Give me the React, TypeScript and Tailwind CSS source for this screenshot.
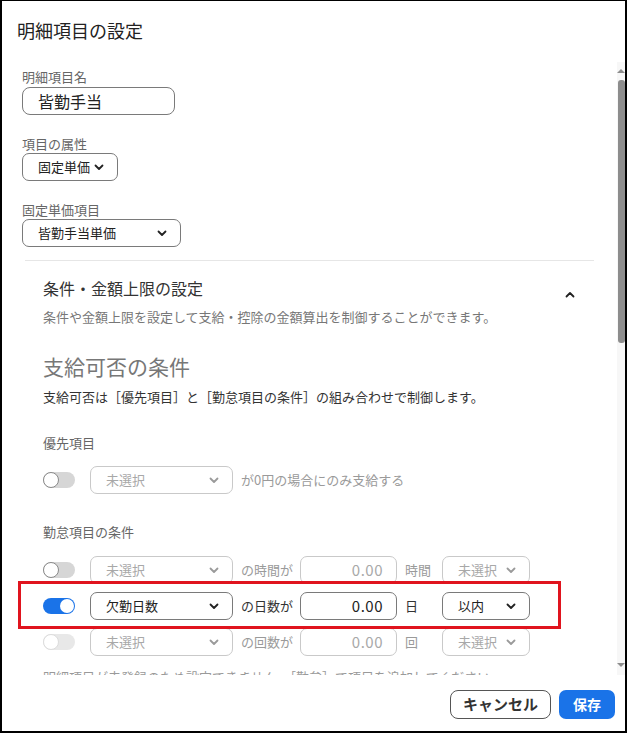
import React from "react";

const FONT = { fontFamily: '"Noto Sans CJK JP", "Noto Sans", sans-serif' };

function Chevron({ className = "" }: { className?: string }) {
  return (
    <svg width="10" height="7" viewBox="0 0 10 7" className={className}>
      <path d="M1.5 1.5 L5 5 L8.5 1.5" fill="none" stroke="currentColor" strokeWidth="1.8" strokeLinecap="round" strokeLinejoin="round" />
    </svg>
  );
}

function Toggle({ on, faint }: { on?: boolean; faint?: boolean }) {
  if (on) {
    return (
      <div className="relative w-[32px] h-[16px] rounded-full bg-[#1a73e8] shrink-0">
        <div className="absolute right-[1px] top-[1px] w-[14px] h-[14px] rounded-full bg-white" />
      </div>
    );
  }
  return (
    <div className={`relative w-[32px] h-[16px] rounded-full shrink-0 ${faint ? "bg-[#e8e8e8]" : "bg-[#d6d6d6]"}`}>
      <div className={`absolute left-0 top-0 w-[16px] h-[16px] rounded-full bg-white border ${faint ? "border-[#dcdcdc]" : "border-[#8a8a8a]"}`} />
    </div>
  );
}

function Select({ w, text, disabled }: { w: string; text: string; disabled?: boolean }) {
  return (
    <div
      className={`${w} h-[28px] shrink-0 rounded-[7px] border flex items-center justify-between pl-[15px] pr-[13px] text-[13px] ${
        disabled ? "border-[#c9c9c9] text-[#a8a8a8]" : "border-[#7a7a7a] text-[#222]"
      }`}
    >
      <span>{text}</span>
      <Chevron className={disabled ? "text-[#9a9a9a]" : "text-[#222]"} />
    </div>
  );
}

function NumInput({ disabled }: { disabled?: boolean }) {
  return (
    <div
      className={`w-[97px] h-[28px] shrink-0 rounded-[7px] border flex items-center justify-end pr-[13px] text-[15px] tracking-[0.5px] ${
        disabled ? "border-[#c9c9c9] text-[#a8a8a8]" : "border-[#7a7a7a] text-[#222]"
      }`}
    >
      0.00
    </div>
  );
}

function CondRow({
  on,
  faint,
  disabled,
  selText,
  label,
  unit,
  sel2,
}: {
  on?: boolean;
  faint?: boolean;
  disabled?: boolean;
  selText: string;
  label: string;
  unit: string;
  sel2: string;
}) {
  return (
    <div className="flex items-center h-[28px]">
      <div className="w-[47px] shrink-0 flex">
        <Toggle on={on} faint={faint} />
      </div>
      <Select w="w-[143px]" text={selText} disabled={disabled} />
      <div className={`w-[67px] shrink-0 pl-[8px] text-[13px] ${disabled ? "text-[#9a9a9a]" : "text-[#333]"}`}>{label}</div>
      <NumInput disabled={disabled} />
      <div className={`w-[45px] shrink-0 pl-[8px] text-[13px] ${disabled ? "text-[#9a9a9a]" : "text-[#333]"}`}>{unit}</div>
      <Select w="w-[88px]" text={sel2} disabled={disabled} />
    </div>
  );
}

export default function App() {
  return (
    <div
      style={FONT}
      className="w-[627px] h-[733px] bg-white border-l-2 border-r-2 border-t border-b-2 border-black flex flex-col overflow-hidden"
    >
      {/* header */}
      <div className="h-[61px] shrink-0 flex items-center pl-[15px] pb-[3px] text-[18px] text-[#222]">明細項目の設定</div>

      {/* body */}
      <div className="h-[613px] shrink-0 flex">
        <div className="flex-1 overflow-hidden pl-[20px] pr-[21px]">
          <div className="mt-[6px] text-[13px] leading-[18px] text-[#666]">明細項目名</div>
          <div className="mt-[1px] w-[153px] h-[28px] rounded-[8px] border border-[#7a7a7a] flex items-center pl-[15px] text-[16px] text-[#222]">
            皆勤手当
          </div>

          <div className="mt-[20px] text-[13px] leading-[18px] text-[#666]">項目の属性</div>
          <div>
            <Select w="w-[96px]" text="固定単価" />
          </div>

          <div className="mt-[20px] text-[13px] leading-[18px] text-[#666]">固定単価項目</div>
          <div>
            <div className="w-[159px] h-[28px] rounded-[7px] border border-[#7a7a7a] flex items-center justify-between pl-[15px] pr-[13px] text-[13px] text-[#222]">
              <span>皆勤手当単価</span>
              <Chevron className="text-[#222]" />
            </div>
          </div>

          <div className="mt-[13px] ml-[3px] w-[569px] h-px bg-[#e6e6e6]" />

          {/* accordion */}
          <div className="pl-[21px] pr-[21px]">
            <div className="mt-[16px] flex items-center justify-between h-[22px]">
              <div className="text-[16px] text-[#333]">条件・金額上限の設定</div>
              <svg width="10" height="7" viewBox="0 0 10 7" className="mt-[12px] text-[#222]">
                <path d="M1.5 5.5 L5 2 L8.5 5.5" fill="none" stroke="currentColor" strokeWidth="1.8" strokeLinecap="round" strokeLinejoin="round" />
              </svg>
            </div>
            <div className="mt-[9px] text-[13px] leading-[18px] text-[#777]">
              条件や金額上限を設定して支給・控除の金額算出を制御することができます。
            </div>

            <div className="mt-[26px] text-[21px] leading-[28px] text-[#777]">支給可否の条件</div>
            <div className="mt-[8px] text-[13px] leading-[18px] text-[#333]">
              支給可否は［優先項目］と［勤怠項目の条件］の組み合わせで制御します。
            </div>

            <div className="mt-[28px] text-[13px] leading-[18px] text-[#666]">優先項目</div>
            <div className="mt-[14px] flex items-center h-[28px]">
              <div className="w-[47px] shrink-0 flex">
                <Toggle />
              </div>
              <Select w="w-[143px]" text="未選択" disabled />
              <div className="pl-[8px] text-[13px] text-[#9a9a9a]">が0円の場合にのみ支給する</div>
            </div>

            <div className="mt-[29px] text-[13px] leading-[18px] text-[#666]">勤怠項目の条件</div>
            <div className="mt-[15px] flex flex-col gap-[8px]">
              <CondRow disabled selText="未選択" label="の時間が" unit="時間" sel2="未選択" />
              <div className="relative">
                <CondRow on selText="欠勤日数" label="の日数が" unit="日" sel2="以内" />
                <div className="absolute left-[-25px] top-[-11px] w-[543px] h-[48px] border-[3px] border-[#e0141e] pointer-events-none" />
              </div>
              <CondRow faint disabled selText="未選択" label="の回数が" unit="回" sel2="未選択" />
            </div>
            <div className="mt-[12px] text-[13px] leading-[18px] text-[#9a9a9a] whitespace-nowrap">
              明細項目が未登録のため設定できません。［勤怠］で項目を追加してください
            </div>
          </div>
        </div>

        {/* scrollbar */}
        <div className="w-[8px] shrink-0 bg-[#f7f7f7] flex flex-col items-center">
          <div className="h-[4px]" />
          <svg width="8" height="5" viewBox="0 0 8 5" className="mt-[2px]">
            <path d="M0 5 L4 1 L8 5 Z" fill="#8d8d8d" />
          </svg>
          <div className="mt-[7px] w-[7px] h-[263px] rounded-[3px] bg-[#8d8d8d]" />
          <div className="flex-1" />
          <svg width="8" height="5" viewBox="0 0 8 5" className="mb-[7px]">
            <path d="M0 0 L8 0 L4 4 Z" fill="#8d8d8d" />
          </svg>
        </div>
      </div>

      {/* footer */}
      <div className="flex-1 flex justify-end items-start pt-[15px] pr-[10px] gap-[8px]">
        <div className="w-[101px] h-[29px] rounded-[8px] border border-[#555] flex items-center justify-center text-[15px] font-bold text-[#333]">
          キャンセル
        </div>
        <div className="w-[56px] h-[29px] rounded-[7px] bg-[#1a73e8] flex items-center justify-center text-[14px] font-bold text-white">
          保存
        </div>
      </div>
    </div>
  );
}
